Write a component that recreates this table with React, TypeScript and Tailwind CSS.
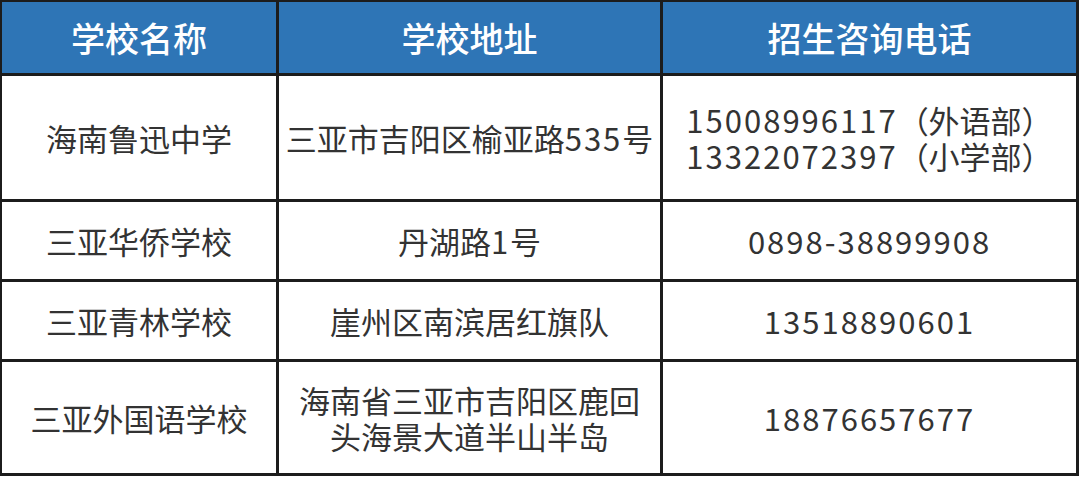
const rows: { name: string; address: string[]; phones: string[] }[] = [
  {
    name: "海南鲁迅中学",
    address: ["三亚市吉阳区榆亚路535号"],
    phones: ["15008996117（外语部）", "13322072397（小学部）"],
  },
  { name: "三亚华侨学校", address: ["丹湖路1号"], phones: ["0898-38899908"] },
  { name: "三亚青林学校", address: ["崖州区南滨居红旗队"], phones: ["13518890601"] },
  {
    name: "三亚外国语学校",
    address: ["海南省三亚市吉阳区鹿回", "头海景大道半山半岛"],
    phones: ["18876657677"],
  },
]

// digits in the source are a bit wider than Noto's, so space them out
function Line({ text }: { text: string }) {
  const parts = text.split(/([0-9-]+)/).filter(Boolean)
  return (
    <span>
      {parts.map((p, i) =>
        /^[0-9-]+$/.test(p) ? (
          <span key={i} className="tracking-[2px]">
            {p}
          </span>
        ) : (
          <span key={i}>{p}</span>
        )
      )}
    </span>
  )
}

function HeadCell({ children }: { children: string }) {
  return (
    <div className="flex items-center justify-center bg-[#2e75b6] text-[34px] font-medium text-white">
      {children}
    </div>
  )
}

function BodyCell({ lines }: { lines: string[] }) {
  return (
    <div className="flex flex-col items-center justify-center bg-white text-[31px] leading-[36px] text-[#333333]">
      {lines.map((line) => (
        <Line key={line} text={line} />
      ))}
    </div>
  )
}

export default function App() {
  return (
    <main className="h-[477px] w-[1080px] bg-white" style={{ fontFamily: '"Noto Sans CJK SC", "Noto Sans", sans-serif' }}>
      <div className="grid w-[1079px] grid-cols-[274px_381px_413px] grid-rows-[71px_123px_77px_77px_111px] gap-[3px] bg-[#1c1c1c] pb-[3px] pl-[2px] pr-[3px] pt-[2px]">
        <HeadCell>学校名称</HeadCell>
        <HeadCell>学校地址</HeadCell>
        <HeadCell>招生咨询电话</HeadCell>

        {rows.map((row) => [
          <BodyCell key={row.name + "-n"} lines={[row.name]} />,
          <BodyCell key={row.name + "-a"} lines={row.address} />,
          <BodyCell key={row.name + "-p"} lines={row.phones} />,
        ])}
      </div>
    </main>
  )
}
